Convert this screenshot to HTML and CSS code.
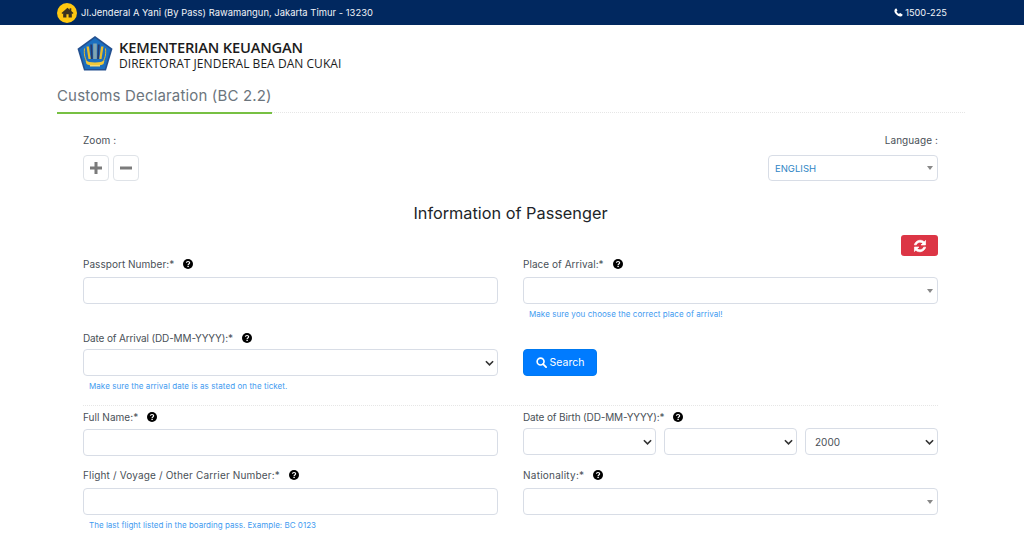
FILE: index.html
```html
<!DOCTYPE html>
<html lang="en">
<head>
<meta charset="utf-8">
<title>Customs Declaration (BC 2.2)</title>
<link rel="stylesheet" href="styles.css">
</head>
<body>
<header class="topbar">
  <div class="topbar-left">
    <span class="home-badge"><svg viewBox="0 0 24 24" width="13" height="13"><path fill="#3a3320" d="M12 3 1 13l1.500 1.600L4 13.300V21h6v-6h4v6h6v-7.700l1.500 1.300L23 13l-4-3.600V4h-3v2.700z"/></svg></span>
    <span>Jl.Jenderal A Yani (By Pass) Rawamangun, Jakarta Timur - 13230</span>
  </div>
  <div class="topbar-right">
    <svg viewBox="0 0 24 24" width="9" height="9"><path fill="#fff" d="M23 17.500c0 .6-.1 1.400-.3 2.100-.3 1-1.500 1.900-2.600 2.400-1 .5-2 .8-3.100.8-2.300 0-4.400-1-6.400-2.200-2-1.300-3.900-3-5.500-4.800C3.300 14 1.900 12 1.300 9.900 .8 8.300 .9 6.500 1.600 5c.5-1.100 1.300-2.400 2.300-2.900C4.600 1.700 5.500 1.400 6.100 1.300c.5-.1.700.2.900.6l2 4c.2.400.1.900-.2 1.200L7.300 8.700c-.3.300-.4.700-.2 1.100.5 1.100 1.300 2.100 2.300 3.200 1 1 2.200 2 3.400 2.600.4.200.8.100 1.100-.2l1.500-1.600c.3-.3.800-.4 1.200-.2l4 2.100c.5.300 1.400.700 2.400 1.800z"/></svg>
    <span>1500-225</span>
  </div>
</header>

<div class="brand">
  <svg class="logo" viewBox="0 0 36 35" width="36" height="35">
    <path fill="#24508f" d="M18 0 35.500 12.800 29 34.500H7L.5 12.800z"/>
    <path fill="#1b6fc0" d="M18 2 33.500 13.300 27.800 33H8.200L2.500 13.300z"/>
    <path fill="none" stroke="#e9b92a" stroke-width="1" d="M7.500 12.500C6.500 20 9 26 13 28.500M28.500 12.500C29.500 20 27 26 23 28.500"/>
    <path fill="#e8bd2c" d="M9.500 10.500h2.400l1.800 12.500h-2.200zM24.100 10.500h2.400L24.500 23h-2.200z"/>
    <path fill="#27386a" d="M13.300 8.500h1.900l.6 14.500h-1.700zM20.800 8.500h1.900L21.900 23h-1.700z"/>
    <path fill="#e8dca0" d="M16.600 7.500h.9v15.500h-.9zM18.500 7.500h.9v15.500h-.9z"/>
    <path fill="#f1c838" d="M8.500 24.500c3 2.500 16 2.500 19 0l-1 3.500c-3 2-14 2-17 0z"/>
    <path fill="#f4dc7a" d="M13 29h10v1.500H13z"/>
  </svg>
  <div class="brand-text">
    <div class="brand-main">KEMENTERIAN KEUANGAN</div>
    <div class="brand-sub">DIREKTORAT JENDERAL BEA DAN CUKAI</div>
  </div>
</div>

<main class="page">
  <div class="tabbar"><h1 class="tab-title">Customs Declaration (BC 2.2)</h1></div>

  <div class="form-wrap">
    <div class="tools">
      <div>
        <div class="tool-label">Zoom :</div>
        <div class="zoom-buttons">
          <button class="zoom-btn" type="button" aria-label="Zoom in"><svg viewBox="0 0 12 12" width="12" height="12"><path fill="#7b7b7b" d="M4.500 0h3v4.500H12v3H7.500V12h-3V7.500H0v-3h4.500z"/></svg></button>
          <button class="zoom-btn" type="button" aria-label="Zoom out"><svg viewBox="0 0 12 12" width="12" height="12"><path fill="#7b7b7b" d="M0 4.500h12v3H0z"/></svg></button>
        </div>
      </div>
      <div class="language">
        <div class="tool-label">Language :</div>
        <div class="fake-select lang-select"><span>ENGLISH</span><i class="caret"></i></div>
      </div>
    </div>

    <h2 class="form-title">Information of Passenger</h2>

    <div class="refresh-row">
      <button class="refresh-btn" type="button" aria-label="Reset"><svg viewBox="0 0 24 24" width="14" height="14"><path fill="#fff" stroke="#fff" stroke-width="1.200" d="M21.500 2.500v7.700h-7.700l3-3A7 7 0 0 0 5.600 10H2.300A10.300 10.300 0 0 1 19.200 4.800zM2.500 21.500v-7.700h7.700l-3 3A7 7 0 0 0 18.400 14h3.300A10.300 10.300 0 0 1 4.800 19.200z"/></svg></button>
    </div>

    <div class="row row-one">
      <div class="field">
        <label class="label">Passport Number:* <svg class="help" viewBox="0 0 20 20"><use href="#q"/></svg></label>
        <input class="control" type="text">
      </div>
      <div class="field">
        <label class="label">Place of Arrival:* <svg class="help" viewBox="0 0 20 20"><use href="#q"/></svg></label>
        <div class="fake-select"><i class="caret"></i></div>
        <p class="hint">Make sure you choose the correct place of arrival!</p>
      </div>
    </div>

    <div class="row row-two">
      <div class="field">
        <label class="label tight">Date of Arrival (DD-MM-YYYY):* <svg class="help" viewBox="0 0 20 20"><use href="#q"/></svg></label>
        <select class="control chevron"><option></option></select>
        <p class="hint">Make sure the arrival date is as stated on the ticket.</p>
      </div>
      <div class="field search-cell">
        <button class="search-btn" type="button"><svg viewBox="0 0 24 24" width="11" height="11"><circle cx="10" cy="10" r="7.500" fill="none" stroke="#fff" stroke-width="3.600"/><path d="m15.500 15.500 6.500 6.500" stroke="#fff" stroke-width="4" stroke-linecap="round"/></svg> Search</button>
      </div>
    </div>

    <hr class="divider">

    <div class="row row-three">
      <div class="field">
        <label class="label close">Full Name:* <svg class="help" viewBox="0 0 20 20"><use href="#q"/></svg></label>
        <input class="control" type="text">
      </div>
      <div class="field">
        <label class="label tight">Date of Birth (DD-MM-YYYY):* <svg class="help" viewBox="0 0 20 20"><use href="#q"/></svg></label>
        <div class="dob">
          <select class="control chevron"><option></option></select>
          <select class="control chevron"><option></option></select>
          <select class="control chevron"><option>2000</option></select>
        </div>
      </div>
    </div>

    <div class="row row-four">
      <div class="field">
        <label class="label wide">Flight / Voyage / Other Carrier Number:* <svg class="help" viewBox="0 0 20 20"><use href="#q"/></svg></label>
        <input class="control" type="text">
        <p class="hint hint-flight">The last flight listed in the boarding pass. Example: BC 0123</p>
      </div>
      <div class="field">
        <label class="label nation">Nationality:* <svg class="help" viewBox="0 0 20 20"><use href="#q"/></svg></label>
        <div class="fake-select"><i class="caret"></i></div>
      </div>
    </div>
  </div>
</main>

<svg class="defs" width="0" height="0" aria-hidden="true">
  <symbol id="q" viewBox="0 0 20 20">
    <circle cx="10" cy="10" r="10" fill="#000"/>
    <path d="M6.800 7.600C7 5.800 8.300 5 10 5c1.900 0 3.300 1 3.300 2.700 0 2.300-3.100 2.300-3.100 4.500" fill="none" stroke="#fff" stroke-width="2.400"/>
    <rect x="8.800" y="13.500" width="2.800" height="2.600" fill="#fff"/>
  </symbol>
</svg>
</body>
</html>
```
FILE: styles.css
```css
* { box-sizing: border-box; }
html, body { margin: 0; height: 537px; overflow: hidden; background: #fff; }
body { font-family: Inter, "Open Sans", sans-serif; font-size: 10px; color: #495057; }

.topbar { height: 25px; background: #01285f; color: #f2f4f8; display: flex; justify-content: space-between; align-items: center; padding: 0 77px 0 57px; font-size: 9.400px; letter-spacing: .03px; }
.topbar-left { display: flex; align-items: center; gap: 4px; }
.topbar-right { display: flex; align-items: center; gap: 2px; font-size: 9.200px; }
.home-badge { width: 20px; height: 20px; border-radius: 50%; background: #fec810; display: flex; align-items: center; justify-content: center; }

.brand { height: 55px; padding: 11px 0 0 77px; display: flex; gap: 6px; align-items: flex-start; }
.logo { flex: none; }
.brand-text { font-family: "Open Sans", sans-serif; color: #1c1c1c; padding-top: 3px; }
.brand-main { font-size: 14.700px; font-weight: 600; line-height: 17px; letter-spacing: -.2px; }
.brand-sub { font-size: 12px; line-height: 16px; letter-spacing: .04px; }

.page { margin: 0 59px 0 57px; }
.tabbar { height: 33px; border-bottom: 1px dotted #e6e6e6; }
.tab-title { display: inline-block; height: 34px; margin: 0; padding-top: 6px; border-bottom: 2px solid #77c043; font-size: 15px; font-weight: 400; line-height: 20px; letter-spacing: .16px; color: #6c757d; }

.form-wrap { padding: 0 27px 0 26px; }
.tools { display: flex; justify-content: space-between; padding-top: 20px; }
.tool-label { height: 15px; line-height: 15px; font-size: 10px; letter-spacing: .08px; }
.zoom-buttons { display: flex; gap: 4px; margin-top: 7px; }
.zoom-btn { width: 26px; height: 26px; padding: 0; background: #fff; border: 1px solid #dfe3e8; border-radius: 4px; display: flex; align-items: center; justify-content: center; }
.language { width: 170px; text-align: right; }
.language .tool-label { margin-bottom: 7px; }

.fake-select { position: relative; height: 27px; background: #fff; border: 1px solid #d8dde6; border-radius: 4px; display: flex; align-items: center; padding-left: 6px; }
.lang-select { height: 26px; text-align: left; color: #2f86c5; font-size: 9.500px; }
.caret { position: absolute; right: 4px; top: 50%; margin-top: -2px; width: 0; height: 0; border: 3.500px solid transparent; border-top: 4px solid #888; border-bottom: 0; }

.form-title { margin: 0; padding-top: 22px; height: 54px; text-align: center; font-size: 16.300px; font-weight: 400; line-height: 20px; color: #212529; }

.refresh-row { display: flex; justify-content: flex-end; height: 21px; }
.refresh-btn { width: 37px; height: 21px; padding: 0; border: 0; border-radius: 3px; background: #dc3545; display: flex; align-items: center; justify-content: center; }

.row { display: grid; grid-template-columns: 415px 415px; gap: 25px; }
.row-one { height: 74px; }
.row-two { height: 75px; }
.row-three { height: 58px; }
.row-four { height: 70px; }
.field { min-width: 0; }
.label { display: flex; align-items: center; height: 16px; margin-bottom: 5px; font-size: 10px; line-height: 16px; letter-spacing: .04px; color: #495057; }
.label.tight { margin-bottom: 3px; letter-spacing: -.14px; }
.label.close { margin-bottom: 4px; }
.label.wide { margin-bottom: 5px; letter-spacing: .16px; }
.label.nation { margin-bottom: 5px; letter-spacing: .24px; }
.help { width: 10px; height: 10px; margin-left: 9px; }

.control { display: block; width: 100%; height: 27px; background: #fff; border: 1px solid #d8dde6; border-radius: 4px; padding: 0 9px; font-family: inherit; font-size: 10px; color: #495057; }
.chevron { appearance: none; background: #fff url("data:image/svg+xml,%3Csvg xmlns='http://www.w3.org/2000/svg' viewBox='0 0 10 6'%3E%3Cpath d='M1 1l4 4 4-4' fill='none' stroke='%23333' stroke-width='1.800'/%3E%3C/svg%3E") no-repeat right 3px center / 9px 6px; }

.hint { margin: 5px 0 0 6px; font-size: 8px; line-height: 11px; letter-spacing: .07px; color: #3f9bf0; }
.hint.hint-flight { margin-top: 5px; letter-spacing: .02px; }

.search-cell { padding-top: 19px; }
.search-btn { width: 74px; height: 27px; padding: 0; border: 1px solid #0079f0; border-radius: 4px; background: #007bff; color: #fff; font-family: inherit; font-size: 10.500px; display: flex; align-items: center; justify-content: center; gap: 3px; }

.divider { margin: 0 0 3px; border: 0; border-top: 1px dotted #e6e6e6; }

.dob { display: grid; grid-template-columns: 133px 133px 133px; gap: 8px; }

.defs { position: absolute; }
```
